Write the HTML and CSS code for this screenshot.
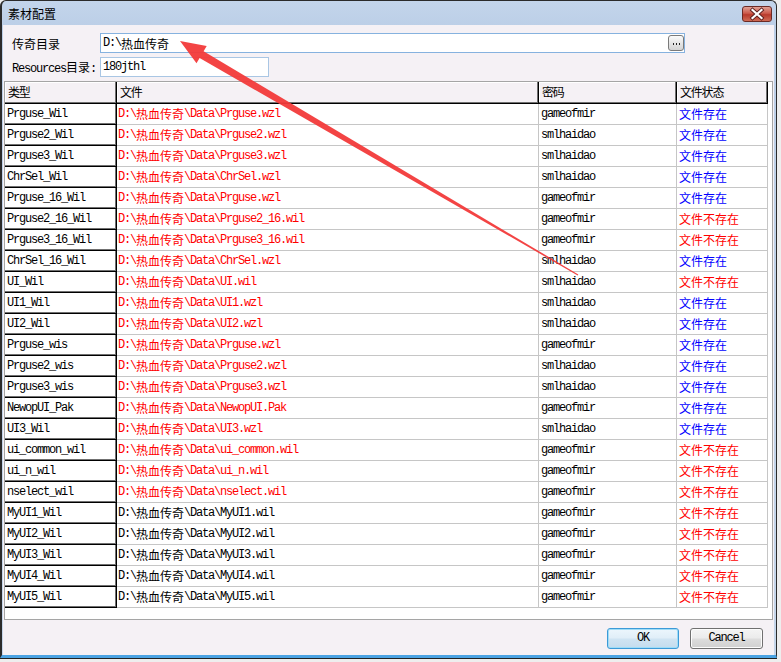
FILE: index.html
```html
<!DOCTYPE html>
<html>
<head>
<meta charset="utf-8">
<link rel="stylesheet" href="styles.css">
</head>
<body>
<div class="win">
  <div class="titlebar">
    <span class="title">素材配置</span>
    <div class="close">
      <svg width="30" height="16" viewBox="0 0 30 16">
        <path d="M10.5 4 L19.5 12 M19.5 4 L10.5 12" stroke="#5a2020" stroke-width="4" stroke-linecap="square"/>
        <path d="M10.5 4 L19.5 12 M19.5 4 L10.5 12" stroke="#ffffff" stroke-width="2.2" stroke-linecap="square"/>
      </svg>
    </div>
  </div>
  <div class="client">
    <div class="field-row">
      <span class="label k">传奇目录</span>
      <div class="input wide"><span class="m">D:\</span><span class="k">热血传奇</span><span class="browse"><span class="dots"></span></span></div>
    </div>
    <div class="field-row r2">
      <span class="label"><span class="m">Resources</span><span class="k">目录</span><span class="m">:</span></span>
      <div class="input narrow"><span class="m">180jthl</span></div>
    </div>
    <div class="grid">
      <div class="row head"><div class="c h c1 k">类型</div><div class="c h c2 k">文件</div><div class="c h c3 k">密码</div><div class="c h c4 k">文件状态</div></div>
      <div class="row"><div class="c c1">Prguse_Wil</div><div class="c c2 red">D:\<span class="k">热血传奇</span>\Data\Prguse.wzl</div><div class="c c3">gameofmir</div><div class="c c4 ok"><span class="k">文件存在</span></div></div>
      <div class="row"><div class="c c1">Prguse2_Wil</div><div class="c c2 red">D:\<span class="k">热血传奇</span>\Data\Prguse2.wzl</div><div class="c c3">smlhaidao</div><div class="c c4 ok"><span class="k">文件存在</span></div></div>
      <div class="row"><div class="c c1">Prguse3_Wil</div><div class="c c2 red">D:\<span class="k">热血传奇</span>\Data\Prguse3.wzl</div><div class="c c3">smlhaidao</div><div class="c c4 ok"><span class="k">文件存在</span></div></div>
      <div class="row"><div class="c c1">ChrSel_Wil</div><div class="c c2 red">D:\<span class="k">热血传奇</span>\Data\ChrSel.wzl</div><div class="c c3">smlhaidao</div><div class="c c4 ok"><span class="k">文件存在</span></div></div>
      <div class="row"><div class="c c1">Prguse_16_Wil</div><div class="c c2 red">D:\<span class="k">热血传奇</span>\Data\Prguse.wzl</div><div class="c c3">gameofmir</div><div class="c c4 ok"><span class="k">文件存在</span></div></div>
      <div class="row"><div class="c c1">Prguse2_16_Wil</div><div class="c c2 red">D:\<span class="k">热血传奇</span>\Data\Prguse2_16.wil</div><div class="c c3">gameofmir</div><div class="c c4 no"><span class="k">文件不存在</span></div></div>
      <div class="row"><div class="c c1">Prguse3_16_Wil</div><div class="c c2 red">D:\<span class="k">热血传奇</span>\Data\Prguse3_16.wil</div><div class="c c3">gameofmir</div><div class="c c4 no"><span class="k">文件不存在</span></div></div>
      <div class="row"><div class="c c1">ChrSel_16_Wil</div><div class="c c2 red">D:\<span class="k">热血传奇</span>\Data\ChrSel.wzl</div><div class="c c3">smlhaidao</div><div class="c c4 ok"><span class="k">文件存在</span></div></div>
      <div class="row"><div class="c c1">UI_Wil</div><div class="c c2 red">D:\<span class="k">热血传奇</span>\Data\UI.wil</div><div class="c c3">smlhaidao</div><div class="c c4 no"><span class="k">文件不存在</span></div></div>
      <div class="row"><div class="c c1">UI1_Wil</div><div class="c c2 red">D:\<span class="k">热血传奇</span>\Data\UI1.wzl</div><div class="c c3">smlhaidao</div><div class="c c4 ok"><span class="k">文件存在</span></div></div>
      <div class="row"><div class="c c1">UI2_Wil</div><div class="c c2 red">D:\<span class="k">热血传奇</span>\Data\UI2.wzl</div><div class="c c3">smlhaidao</div><div class="c c4 ok"><span class="k">文件存在</span></div></div>
      <div class="row"><div class="c c1">Prguse_wis</div><div class="c c2 red">D:\<span class="k">热血传奇</span>\Data\Prguse.wzl</div><div class="c c3">gameofmir</div><div class="c c4 ok"><span class="k">文件存在</span></div></div>
      <div class="row"><div class="c c1">Prguse2_wis</div><div class="c c2 red">D:\<span class="k">热血传奇</span>\Data\Prguse2.wzl</div><div class="c c3">smlhaidao</div><div class="c c4 ok"><span class="k">文件存在</span></div></div>
      <div class="row"><div class="c c1">Prguse3_wis</div><div class="c c2 red">D:\<span class="k">热血传奇</span>\Data\Prguse3.wzl</div><div class="c c3">smlhaidao</div><div class="c c4 ok"><span class="k">文件存在</span></div></div>
      <div class="row"><div class="c c1">NewopUI_Pak</div><div class="c c2 red">D:\<span class="k">热血传奇</span>\Data\NewopUI.Pak</div><div class="c c3">gameofmir</div><div class="c c4 ok"><span class="k">文件存在</span></div></div>
      <div class="row"><div class="c c1">UI3_Wil</div><div class="c c2 red">D:\<span class="k">热血传奇</span>\Data\UI3.wzl</div><div class="c c3">smlhaidao</div><div class="c c4 ok"><span class="k">文件存在</span></div></div>
      <div class="row"><div class="c c1">ui_common_wil</div><div class="c c2 red">D:\<span class="k">热血传奇</span>\Data\ui_common.wil</div><div class="c c3">gameofmir</div><div class="c c4 no"><span class="k">文件不存在</span></div></div>
      <div class="row"><div class="c c1">ui_n_wil</div><div class="c c2 red">D:\<span class="k">热血传奇</span>\Data\ui_n.wil</div><div class="c c3">gameofmir</div><div class="c c4 no"><span class="k">文件不存在</span></div></div>
      <div class="row"><div class="c c1">nselect_wil</div><div class="c c2 red">D:\<span class="k">热血传奇</span>\Data\nselect.wil</div><div class="c c3">gameofmir</div><div class="c c4 no"><span class="k">文件不存在</span></div></div>
      <div class="row"><div class="c c1">MyUI1_Wil</div><div class="c c2">D:\<span class="k">热血传奇</span>\Data\MyUI1.wil</div><div class="c c3">gameofmir</div><div class="c c4 no"><span class="k">文件不存在</span></div></div>
      <div class="row"><div class="c c1">MyUI2_Wil</div><div class="c c2">D:\<span class="k">热血传奇</span>\Data\MyUI2.wil</div><div class="c c3">gameofmir</div><div class="c c4 no"><span class="k">文件不存在</span></div></div>
      <div class="row"><div class="c c1">MyUI3_Wil</div><div class="c c2">D:\<span class="k">热血传奇</span>\Data\MyUI3.wil</div><div class="c c3">gameofmir</div><div class="c c4 no"><span class="k">文件不存在</span></div></div>
      <div class="row"><div class="c c1">MyUI4_Wil</div><div class="c c2">D:\<span class="k">热血传奇</span>\Data\MyUI4.wil</div><div class="c c3">gameofmir</div><div class="c c4 no"><span class="k">文件不存在</span></div></div>
      <div class="row"><div class="c c1">MyUI5_Wil</div><div class="c c2">D:\<span class="k">热血传奇</span>\Data\MyUI5.wil</div><div class="c c3">gameofmir</div><div class="c c4 no"><span class="k">文件不存在</span></div></div>
    </div>
    <div class="footer">
      <div class="btn okbtn">OK</div>
      <div class="btn">Cancel</div>
    </div>
  </div>
</div>
<svg class="arrow" width="781" height="662" viewBox="0 0 781 662">
  <polygon points="180,41 196.5,63.2 199.6,58 577.7,275.4 578.3,274.6 203.6,51.2 206.7,46" fill="#f23a3a" fill-opacity="0.95"/>
</svg>
</body>
</html>
```

FILE: styles.css
```css
html, body {
  margin: 0;
  padding: 0;
}
body {
  width: 781px;
  height: 662px;
  overflow: hidden;
  background: #eeeeee;
  position: relative;
  font-family: "Liberation Mono", monospace;
  font-size: 12px;
  color: #000;
}
.k {
  font-family: "Noto Sans CJK SC", sans-serif;
  font-size: 12px;
  letter-spacing: 0;
}
.m {
  font-family: "Liberation Mono", monospace;
  font-size: 12px;
  letter-spacing: -1.2px;
}
.win {
  width: 777px;
  height: 658px;
  box-sizing: border-box;
  border: 1px solid #2b2b2b;
  border-left-width: 2px;
  border-bottom: 3px solid #4ba3e3;
  border-radius: 6px 6px 0 0;
  box-shadow: 0 1px 0 #222;
  background: linear-gradient(#c3d5eb, #bccfe7 25px, #c6d6ea);
  padding: 0 2px 0 1px;
  display: flex;
  flex-direction: column;
}
.titlebar {
  height: 24px;
  flex: none;
  display: flex;
  align-items: center;
  justify-content: space-between;
  padding-left: 5px;
  padding-right: 2px;
}
.title {
  font-family: "Noto Sans CJK SC", sans-serif;
  font-size: 12px;
  color: #000;
  margin-top: 1px;
}
.close {
  width: 30px;
  height: 16px;
  box-sizing: border-box;
  border: 1px solid #6b2a25;
  border-radius: 3px;
  background: linear-gradient(#e0a195, #cc5a4b 45%, #b83a2c 55%, #cf6a55);
  margin-top: 2px;
  display: flex;
}
.close svg {
  margin: -1px;
}
.client {
  flex: 1;
  background: #f5f1f5;
  padding: 8px 1px 0 1px;
  display: flex;
  flex-direction: column;
}
.field-row {
  display: flex;
  align-items: center;
  height: 20px;
}
.field-row.r2 {
  margin-top: 4px;
}
.label {
  width: 88px;
  padding-left: 8px;
  flex: none;
  white-space: nowrap;
}
.input {
  height: 20px;
  box-sizing: border-box;
  background: #fff;
  border: 1px solid #a9c6e4;
  display: flex;
  align-items: center;
  padding-left: 2px;
  white-space: nowrap;
}
.input.wide {
  width: 585px;
  border-color: #86b2df;
}
.input.narrow {
  width: 169px;
}
.browse {
  margin-left: auto;
  margin-right: 0;
  width: 16px;
  height: 16px;
  box-sizing: border-box;
  border: 1px solid #7a7a7a;
  border-radius: 3px;
  background: linear-gradient(#fbfbfb, #e6e6e6 50%, #d4d4d4);
  display: flex;
  align-items: center;
  justify-content: center;
}
.dots {
  display: block;
  width: 8px;
  height: 2px;
  background: radial-gradient(circle, #222 0.9px, transparent 1.1px) 0 0 / 3px 2px repeat-x;
  margin-top: 2px;
}
.grid {
  margin-top: 4px;
  width: 769px;
  height: 539px;
  box-sizing: border-box;
  border: 1px solid #a5a5a5;
  background: #fff;
  display: flex;
  flex-direction: column;
}
.row {
  display: grid;
  grid-template-columns: 112px 422px 138px 91px;
  height: 21px;
}
.row.head {
  height: 22px;
}
.c {
  box-sizing: border-box;
  height: 21px;
  line-height: 20px;
  padding-left: 2px;
  white-space: nowrap;
  overflow: hidden;
  border-right: 1px solid #c6c6c6;
  border-bottom: 1px solid #c6c6c6;
  letter-spacing: -1.2px;
}
.c .k {
  vertical-align: top;
  line-height: 20px;
}
.c1 {
  border-right: 1px solid #000;
  border-bottom: 1px solid #000;
  box-shadow: inset -1px -1px 0 #707070;
  padding-left: 2px;
}
.c2 {
  padding-left: 1px;
}
.h {
  height: 22px;
  line-height: 20px;
  background: #f5f1f5;
  border-right: 1px solid #000;
  border-bottom: 1px solid #000;
  box-shadow: inset -1px -1px 0 #707070, inset 1px 1px 0 #fff;
  padding-left: 3px;
}
.h.c2 {
  padding-left: 3px;
}
.red {
  color: #f00;
}
.ok {
  color: #0000ff;
}
.no {
  color: #f00;
}
.footer {
  margin-top: 8px;
  display: flex;
  justify-content: flex-end;
  gap: 11px;
  padding-right: 10px;
}
.btn {
  width: 73px;
  height: 21px;
  box-sizing: border-box;
  border: 1px solid #707070;
  border-radius: 3px;
  background: linear-gradient(#f4f4f4, #ebebeb 48%, #dddddd 52%, #d0d0d0);
  box-shadow: inset 0 0 0 1px #fcfcfc;
  text-align: center;
  line-height: 19px;
  font-family: "Liberation Mono", monospace;
  font-size: 12px;
  letter-spacing: -1.2px;
}
.okbtn {
  width: 72px;
  border-color: #3c9ad7;
  box-shadow: inset 0 0 0 1px #9fdcf7;
  background: linear-gradient(#ecf6fc, #e0eef8 48%, #d0e4f2 52%, #c4dcee);
}
.arrow {
  position: absolute;
  left: 0;
  top: 0;
  pointer-events: none;
}
```
